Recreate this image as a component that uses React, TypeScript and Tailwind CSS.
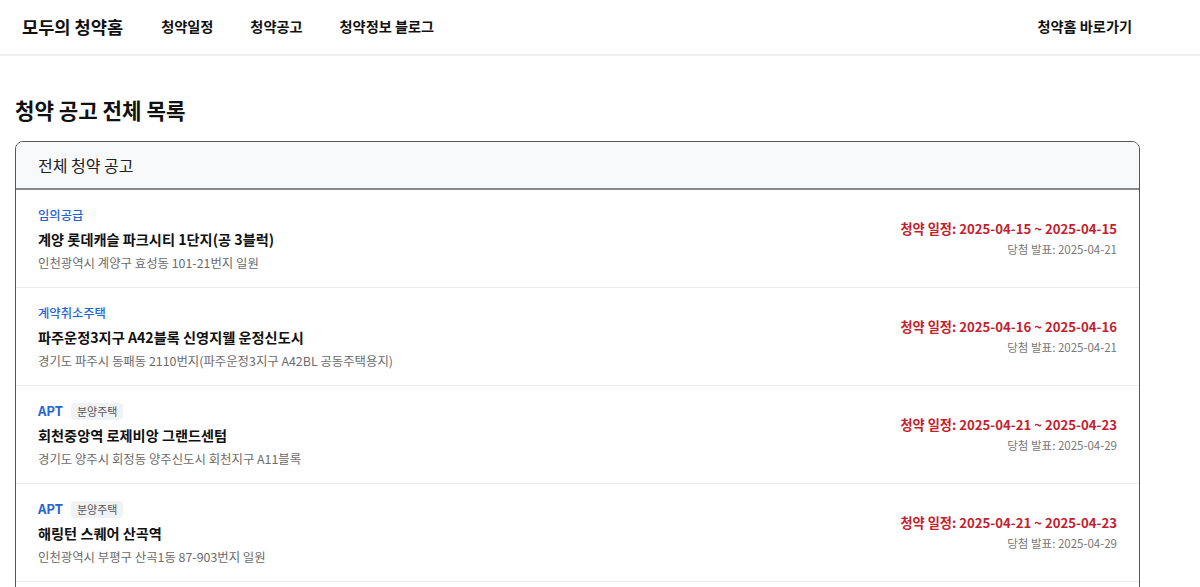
const font = { fontFamily: '"Noto Sans CJK KR", "Noto Sans", sans-serif' };

type Notice = {
  type: string;
  badge?: string;
  title: string;
  address: string;
  start: string;
  end: string;
  announce: string;
};

const notices: Notice[] = [
  {
    type: "임의공급",
    title: "계양 롯데캐슬 파크시티 1단지(공 3블럭)",
    address: "인천광역시 계양구 효성동 101-21번지 일원",
    start: "2025-04-15",
    end: "2025-04-15",
    announce: "2025-04-21",
  },
  {
    type: "계약취소주택",
    title: "파주운정3지구 A42블록 신영지웰 운정신도시",
    address: "경기도 파주시 동패동 2110번지(파주운정3지구 A42BL 공동주택용지)",
    start: "2025-04-16",
    end: "2025-04-16",
    announce: "2025-04-21",
  },
  {
    type: "APT",
    badge: "분양주택",
    title: "회천중앙역 로제비앙 그랜드센텀",
    address: "경기도 양주시 회정동 양주신도시 회천지구 A11블록",
    start: "2025-04-21",
    end: "2025-04-23",
    announce: "2025-04-29",
  },
  {
    type: "APT",
    badge: "분양주택",
    title: "해링턴 스퀘어 산곡역",
    address: "인천광역시 부평구 산곡1동 87-903번지 일원",
    start: "2025-04-21",
    end: "2025-04-23",
    announce: "2025-04-29",
  },
  {
    type: "APT",
    badge: "분양주택",
    title: "e편한세상 시티 평택",
    address: "경기도 평택시 일원",
    start: "2025-04-22",
    end: "2025-04-24",
    announce: "2025-04-30",
  },
];

function NoticeRow({ notice }: { notice: Notice }) {
  const isApt = !!notice.badge;
  return (
    <div className="flex items-center justify-between border-b border-[#ececec] px-[22px] pt-4 pb-[15px]">
      <div className="flex flex-col gap-1">
        {isApt ? (
          <div className="flex h-[18px] items-center gap-2">
            <span className="text-[13px] font-semibold text-[#2563d6]">{notice.type}</span>
            <span className="rounded-[4px] bg-[#f1f2f4] px-[6px] text-[11px] leading-[17px] text-[#555]">
              {notice.badge}
            </span>
          </div>
        ) : (
          <div className="text-[12.3px] leading-[18px] font-medium text-[#2563d6]">{notice.type}</div>
        )}
        <div className="text-[14.2px] leading-[22px] font-semibold text-[#111]">{notice.title}</div>
        <div className="text-[12.4px] leading-[18px] text-[#6b6b6b]">{notice.address}</div>
      </div>
      <div className="flex flex-col items-end gap-[2px]">
        <div className="text-[13.2px] leading-[18px] font-semibold text-[#c4202c]">
          청약 일정: {notice.start} ~ {notice.end}
        </div>
        <div className="text-[11.5px] leading-[18px] text-[#777]">당첨 발표: {notice.announce}</div>
      </div>
    </div>
  );
}

export default function App() {
  return (
    <div className="min-h-screen bg-white text-[#111]" style={font}>
      <header className="flex h-[56px] items-center justify-between border-b-2 border-[#f0f0f0] pl-[22px] pr-[68px]">
        <div className="flex items-center gap-[38px]">
          <div className="text-[17.6px] font-bold">모두의 청약홈</div>
          <nav className="flex items-center gap-[37px] text-[14.2px] font-semibold">
            <span>청약일정</span>
            <span>청약공고</span>
            <span>청약정보 블로그</span>
          </nav>
        </div>
        <span className="text-[14.2px] font-semibold">청약홈 바로가기</span>
      </header>
      <main className="pl-[15px] pt-[36px]">
        <h1 className="text-[21.2px] leading-[36px] font-bold">청약 공고 전체 목록</h1>
        <div className="mt-[13px] w-[1125px] overflow-hidden rounded-t-[8px] border border-[#555]">
          <div className="flex h-[48px] items-center border-b-2 border-[#888] bg-[#f8f9fa] px-[22px] text-[16px] text-[#222]">
            전체 청약 공고
          </div>
          {notices.map((n, i) => (
            <NoticeRow key={i} notice={n} />
          ))}
        </div>
      </main>
    </div>
  );
}
